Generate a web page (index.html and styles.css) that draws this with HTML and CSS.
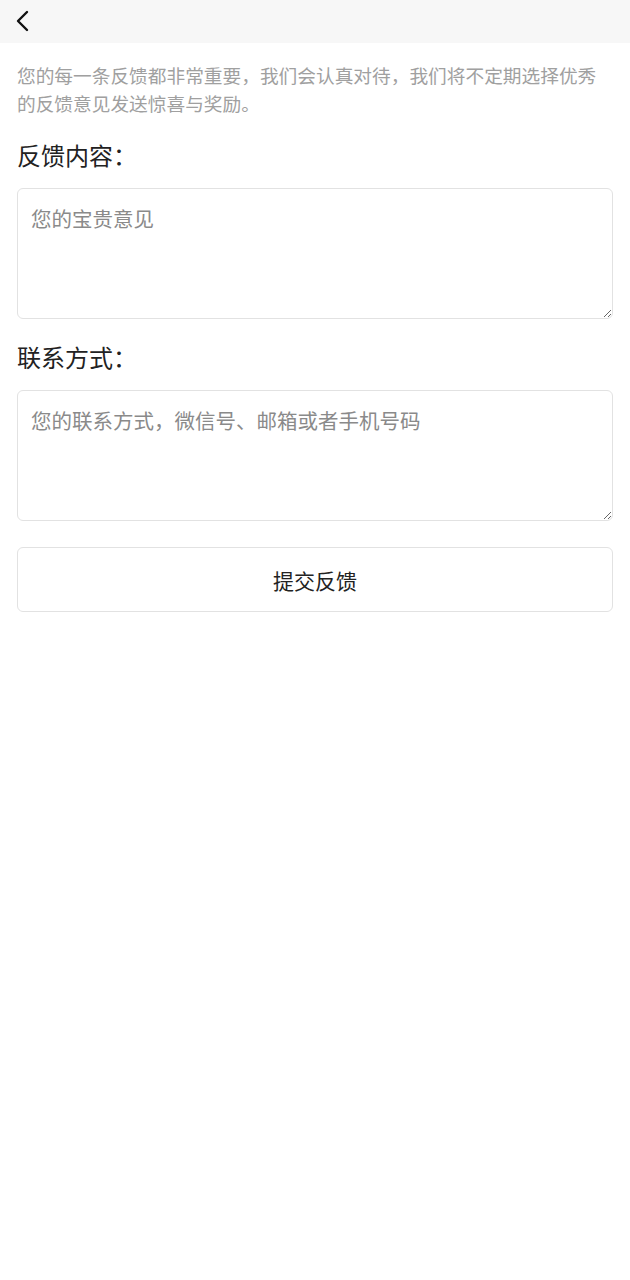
FILE: index.html
```html
<!DOCTYPE html>
<html lang="zh-CN">
<head>
<meta charset="utf-8">
<title>意见反馈</title>
<link rel="stylesheet" href="styles.css">
</head>
<body>
<header class="topbar">
  <button class="back" aria-label="返回">
    <svg width="16" height="22" viewBox="0 0 16 22"><polyline points="12,2 3,11 12,20" fill="none" stroke="#111" stroke-width="2.4" stroke-linecap="round" stroke-linejoin="round"/></svg>
  </button>
</header>
<main class="content">
  <p class="intro">您的每一条反馈都非常重要，我们会认真对待，我们将不定期选择优秀的反馈意见发送惊喜与奖励。</p>
  <h2 class="field-label">反馈内容：</h2>
  <textarea class="field" placeholder="您的宝贵意见"></textarea>
  <h2 class="field-label">联系方式：</h2>
  <textarea class="field" placeholder="您的联系方式，微信号、邮箱或者手机号码"></textarea>
  <button class="submit">提交反馈</button>
</main>
</body>
</html>
```
FILE: styles.css
```css
* { box-sizing: border-box; }
html, body { margin: 0; padding: 0; background: #fff; }
body { font-family: "Noto Sans CJK SC", "Noto Sans", sans-serif; color: #222; }

.topbar {
  height: 43px;
  background: #f7f7f7;
  display: flex;
  align-items: center;
  padding-left: 15px;
}
.back {
  border: 0;
  background: transparent;
  padding: 0;
  display: flex;
  margin-top: -1px;
}

.content {
  padding: 18px 17px 0 17px;
  display: flex;
  flex-direction: column;
}
.intro {
  margin: 0;
  font-size: 18.7px;
  line-height: 28px;
  color: #a0a0a0;
}
.field-label {
  margin: 21px 0 16px 0;
  font-size: 24px;
  line-height: 34px;
  font-weight: 400;
  color: #222;
}
.field {
  display: block;
  width: 100%;
  height: 131px;
  border: 1px solid #e2e2e2;
  border-radius: 6px;
  padding: 14px 13px;
  font-family: inherit;
  font-size: 20.5px;
  line-height: 31px;
  color: #222;
  background: #fff;
  outline: none;
}
.field::placeholder { color: #8a8a8a; }
.submit {
  margin-top: 26px;
  height: 65px;
  width: 100%;
  border: 1px solid #e2e2e2;
  border-radius: 6px;
  background: #fff;
  font-family: inherit;
  font-size: 21px;
  color: #222;
}
```
